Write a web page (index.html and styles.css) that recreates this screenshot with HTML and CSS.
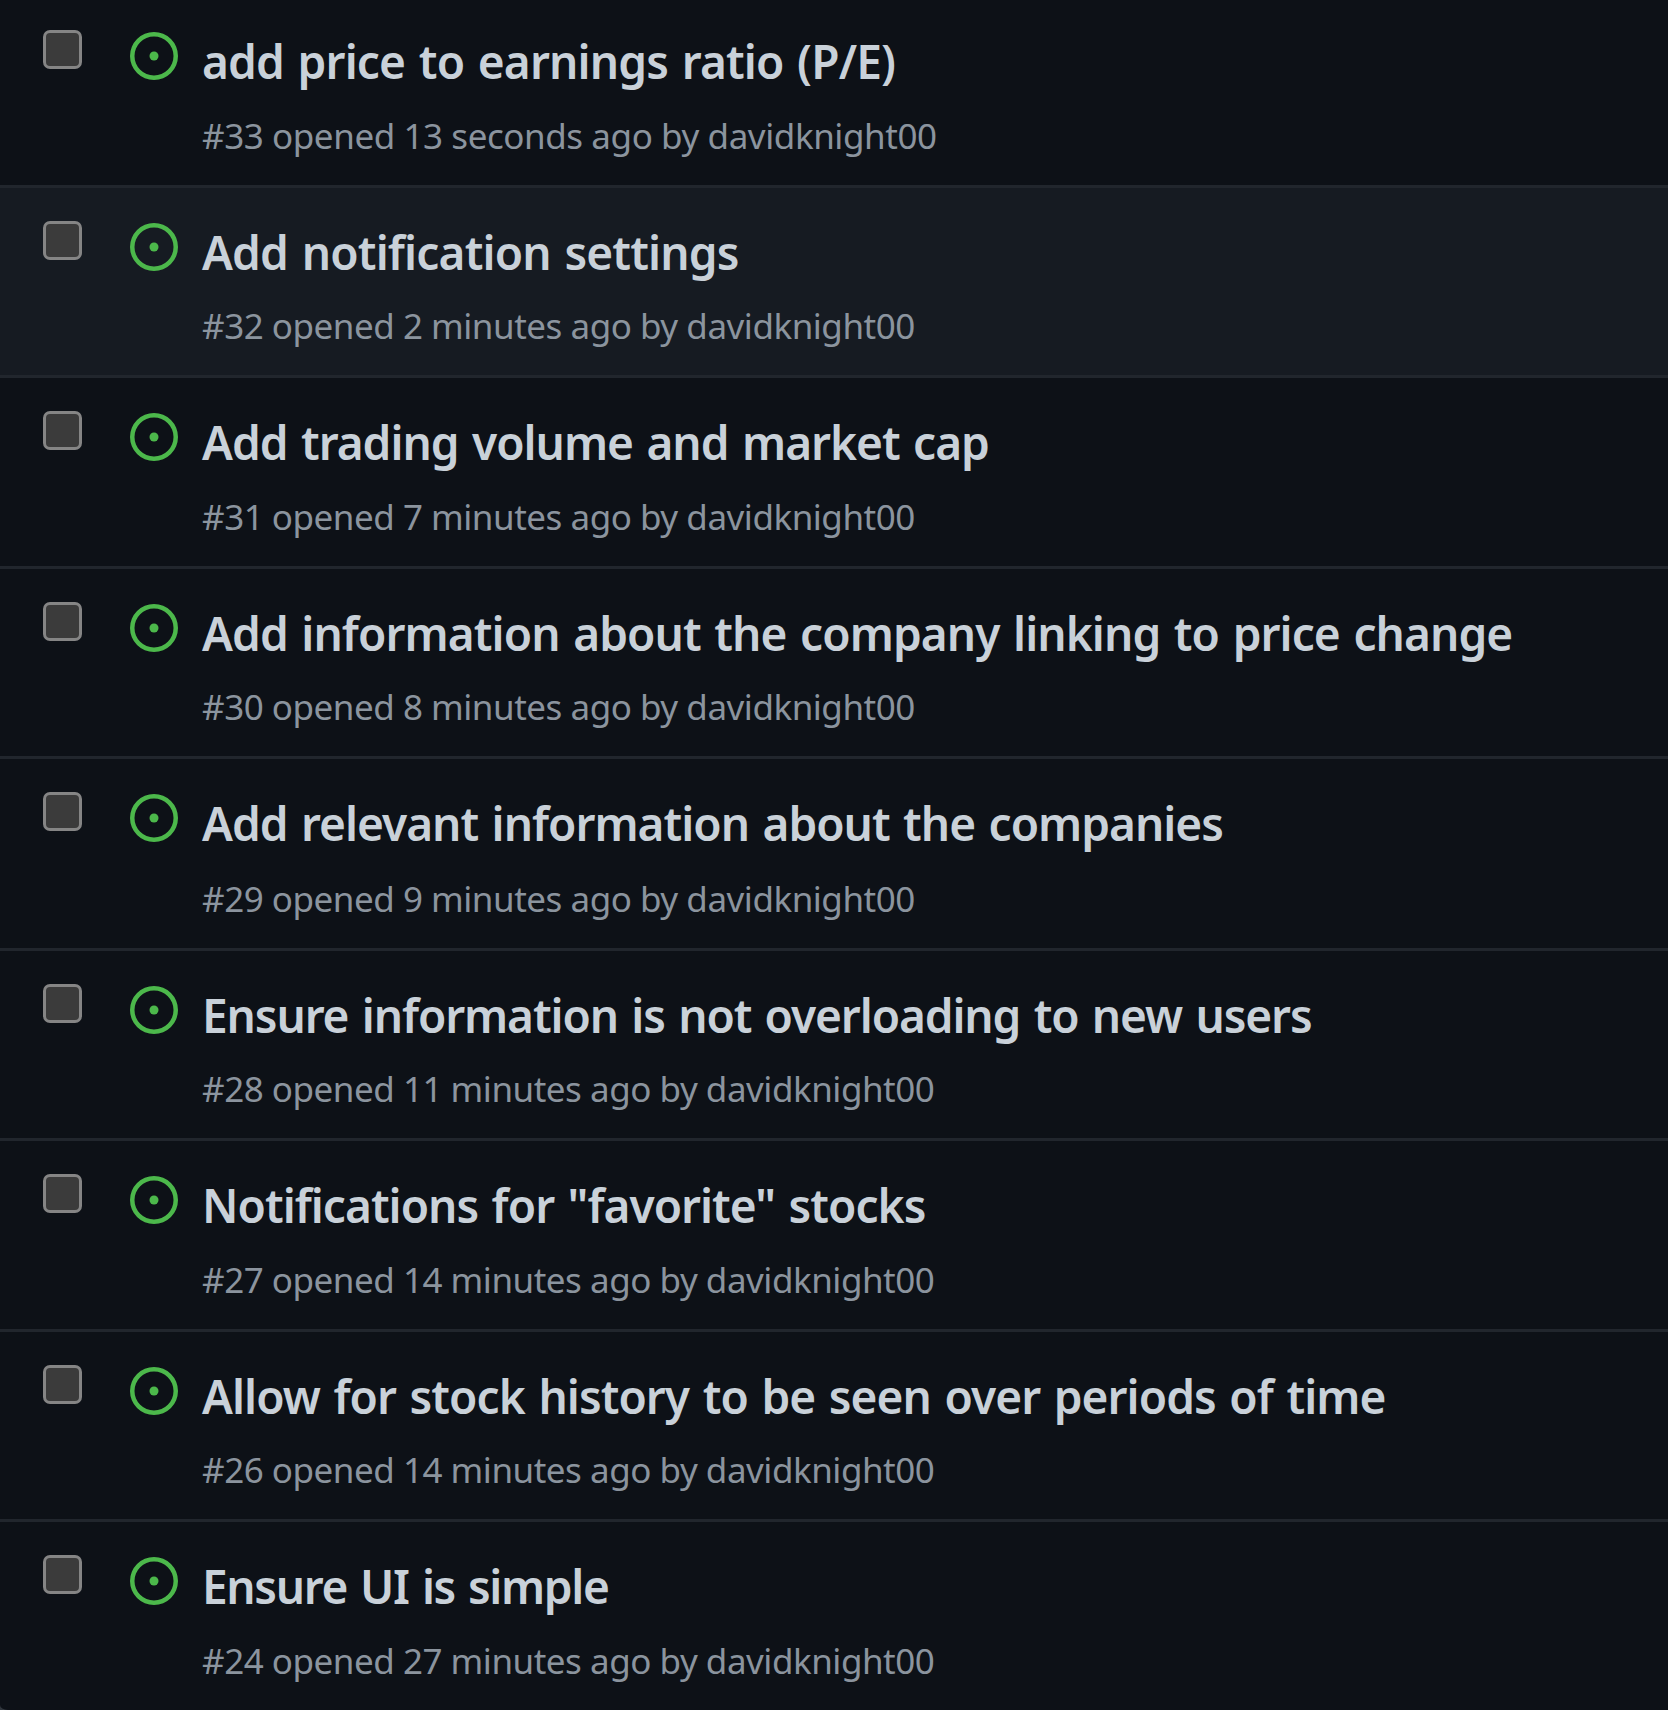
FILE: index.html
```html
<!DOCTYPE html>
<html lang="en">
<head>
<meta charset="utf-8">
<title>Issues</title>
<link rel="stylesheet" href="styles.css">
</head>
<body>
<svg class="sprite" aria-hidden="true">
  <symbol id="issue-open" viewBox="0 0 16 16">
    <path d="M8 9.5a1.5 1.5 0 100-3 1.5 1.5 0 000 3z"/>
    <path fill-rule="evenodd" d="M8 0a8 8 0 100 16A8 8 0 008 0zM1.5 8a6.5 6.5 0 1113 0 6.5 6.5 0 01-13 0z"/>
  </symbol>
</svg>
<ul class="issues">
  <li class="issue">
    <input class="check" type="checkbox">
    <svg class="state"><use href="#issue-open"/></svg>
    <div class="text">
      <h3 class="title">add price to earnings ratio (P/E)</h3>
      <div class="meta">#33 opened 13 seconds ago by davidknight00</div>
    </div>
  </li>
  <li class="issue active">
    <input class="check" type="checkbox">
    <svg class="state"><use href="#issue-open"/></svg>
    <div class="text">
      <h3 class="title">Add notification settings</h3>
      <div class="meta">#32 opened 2 minutes ago by davidknight00</div>
    </div>
  </li>
  <li class="issue">
    <input class="check" type="checkbox">
    <svg class="state"><use href="#issue-open"/></svg>
    <div class="text">
      <h3 class="title">Add trading volume and market cap</h3>
      <div class="meta">#31 opened 7 minutes ago by davidknight00</div>
    </div>
  </li>
  <li class="issue">
    <input class="check" type="checkbox">
    <svg class="state"><use href="#issue-open"/></svg>
    <div class="text">
      <h3 class="title">Add information about the company linking to price change</h3>
      <div class="meta">#30 opened 8 minutes ago by davidknight00</div>
    </div>
  </li>
  <li class="issue">
    <input class="check" type="checkbox">
    <svg class="state"><use href="#issue-open"/></svg>
    <div class="text">
      <h3 class="title">Add relevant information about the companies</h3>
      <div class="meta">#29 opened 9 minutes ago by davidknight00</div>
    </div>
  </li>
  <li class="issue">
    <input class="check" type="checkbox">
    <svg class="state"><use href="#issue-open"/></svg>
    <div class="text">
      <h3 class="title">Ensure information is not overloading to new users</h3>
      <div class="meta">#28 opened 11 minutes ago by davidknight00</div>
    </div>
  </li>
  <li class="issue">
    <input class="check" type="checkbox">
    <svg class="state"><use href="#issue-open"/></svg>
    <div class="text">
      <h3 class="title">Notifications for "favorite" stocks</h3>
      <div class="meta">#27 opened 14 minutes ago by davidknight00</div>
    </div>
  </li>
  <li class="issue">
    <input class="check" type="checkbox">
    <svg class="state"><use href="#issue-open"/></svg>
    <div class="text">
      <h3 class="title">Allow for stock history to be seen over periods of time</h3>
      <div class="meta">#26 opened 14 minutes ago by davidknight00</div>
    </div>
  </li>
  <li class="issue">
    <input class="check" type="checkbox">
    <svg class="state"><use href="#issue-open"/></svg>
    <div class="text">
      <h3 class="title">Ensure UI is simple</h3>
      <div class="meta">#24 opened 27 minutes ago by davidknight00</div>
    </div>
  </li>
</ul>
</body>
</html>
```

FILE: styles.css
```css
* { box-sizing: border-box; }
body { margin: 0; background: #30363d; overflow: hidden; font-family: "Noto Sans", sans-serif; }
.sprite { display: none; }

.issues {
  list-style: none;
  margin: -6px 0 0;
  padding: 0;
  height: 1716px;
  background: #0d1117;
  border-bottom-left-radius: 8px 5px;
  overflow: hidden;
}
.issue { display: flex; height: 190px; border-top: 3px solid #21262d; }
.issue:nth-child(odd) { height: 191px; }
.issue:nth-child(5) { height: 192px; }
.issue.active { background: #161b22; }

.check {
  appearance: none;
  flex: none;
  width: 39px;
  height: 39px;
  margin: 33px 0 0 43px;
  border: 3px solid #858585;
  border-radius: 7px;
  background: #3b3b3b;
}
.state { flex: none; width: 48px; height: 48px; margin: 35px 24px 0 48px; fill: #4cb84b; }

.text { padding-top: 28px; white-space: nowrap; }
.title { margin: 0; color: #c9d1d9; font-size: 46px; font-weight: 600; line-height: 72px; letter-spacing: -0.91px; word-spacing: 2.5px; }
.meta { margin-top: 11px; color: #8b949e; font-size: 35px; line-height: 54px; letter-spacing: -0.48px; }
.issue:nth-child(odd) .meta { margin-top: 12px; }
.issue:nth-child(5) .meta { margin-top: 13px; }

.issue:nth-child(1) .title { letter-spacing: -0.84px; }
.issue:nth-child(1) .meta { letter-spacing: -0.43px; }
.issue:nth-child(2) .title { letter-spacing: -0.82px; }
.issue:nth-child(3) .title { letter-spacing: -1px; }
.issue:nth-child(5) .title { letter-spacing: -0.99px; }
.issue:nth-child(6) .title { letter-spacing: -1.1px; }
.issue:nth-child(7) .title { letter-spacing: -0.97px; }
.issue:nth-child(8) .title { letter-spacing: -0.93px; }
.issue:nth-child(9) .title { letter-spacing: -1.34px; }
```
